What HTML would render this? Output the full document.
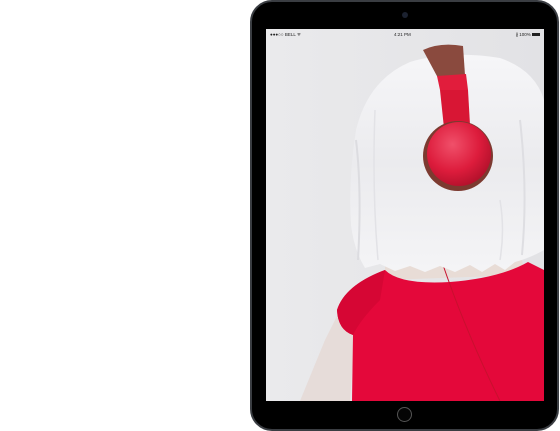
<!DOCTYPE html>
<html><head><meta charset="utf-8"><style>
html,body{margin:0;padding:0;background:#fff;width:560px;height:431px;overflow:hidden;font-family:"Liberation Sans",sans-serif}
.pad{position:absolute;left:250px;top:0;width:305px;height:427px;background:#000;border-radius:22px;border:2px solid #3a3d42;box-sizing:content-box}
.cam{position:absolute;left:402px;top:12px;width:6px;height:6px;border-radius:50%;background:#1c2230}
.home{position:absolute;left:397px;top:407px;width:13px;height:13px;border-radius:50%;border:1.5px solid #555;background:#050505}
.screen{position:absolute;left:266px;top:29px;width:278px;height:372px;overflow:hidden;background:#e9e9eb}
.sb{position:absolute;left:0;top:0;width:278px;height:10px;font-size:4.5px;color:#222}
</style></head><body>
<div class="pad"></div>
<div class="cam"></div>
<div class="home"></div>
<div class="screen">
<svg width="278" height="372" viewBox="266 29 278 372" style="position:absolute;left:0;top:0">
<defs>
<linearGradient id="bg" x1="0" y1="0" x2="1" y2="0"><stop offset="0" stop-color="#eaeaec"/><stop offset="1" stop-color="#e2e2e5"/></linearGradient>
<radialGradient id="cup" cx="0.4" cy="0.35" r="0.7"><stop offset="0" stop-color="#f0506a"/><stop offset="0.6" stop-color="#dd1c3c"/><stop offset="1" stop-color="#b0102a"/></radialGradient>
<linearGradient id="hair" x1="0" y1="0" x2="0" y2="1"><stop offset="0" stop-color="#f6f6f8"/><stop offset="0.5" stop-color="#ebebee"/><stop offset="1" stop-color="#f4f4f6"/></linearGradient>
</defs>
<rect x="266" y="29" width="278" height="372" fill="url(#bg)"/>
<path d="M300 401 L325 340 L345 300 L355 330 L350 401 Z" fill="#e6dcd9"/>
<path d="M520 330 L544 310 L544 401 L520 401 Z" fill="#e6dcd9"/>
<path d="M385 250 L520 250 L525 275 L385 280 Z" fill="#e8dcd6"/>
<path d="M385 270 Q400 285 450 282 Q500 278 528 262 L544 270 L544 401 L352 401 L353 335 Q338 330 337 310 Q345 285 385 270 Z" fill="#e4083a"/>
<path d="M337 310 Q345 285 385 270 L380 300 Q360 320 353 335 Q338 330 337 310Z" fill="#d60634"/>
<path d="M442 262 Q465 330 500 401" stroke="#c8102e" stroke-width="1" fill="none"/>
<path d="M356 130 Q368 80 410 62 Q450 50 500 58 Q535 70 544 100 L544 250 Q530 258 515 262 L505 270 L495 264 L482 272 L470 265 L455 272 L440 266 L425 272 L410 266 L395 271 L380 264 L365 268 Q354 250 351 225 Q348 180 356 130 Z" fill="url(#hair)"/>
<path d="M356 140 Q362 190 358 260" stroke="#dcdce0" stroke-width="2" fill="none"/>
<path d="M375 110 Q372 190 378 260" stroke="#e2e2e6" stroke-width="1.5" fill="none"/>
<path d="M520 120 Q528 190 522 255" stroke="#dedee2" stroke-width="2" fill="none"/>
<path d="M500 200 Q505 230 500 260" stroke="#e2e2e6" stroke-width="1.5" fill="none"/>
<path d="M423 50 Q440 42 463 46 L465 75 L438 78 Z" fill="#8a4a3e"/>
<path d="M437 76 L466 74 L468 90 L440 90 Z" fill="#e11d3c"/>
<path d="M440 90 L468 90 L470 125 L444 128 Z" fill="#d81634"/>
<circle cx="458" cy="156" r="35" fill="#7c3a30"/>
<circle cx="459" cy="154" r="32" fill="url(#cup)"/>
</svg>
<div class="sb">
<span style="position:absolute;left:4px;top:3px">●●●○○ BELL ᯤ</span>
<span style="position:absolute;left:128px;top:3px">4:21 PM</span>
<span style="position:absolute;right:4px;top:3px">∦ 100% <span style="display:inline-block;width:8px;height:3px;background:#222;vertical-align:middle"></span></span>
</div>
</div>
</body></html>
